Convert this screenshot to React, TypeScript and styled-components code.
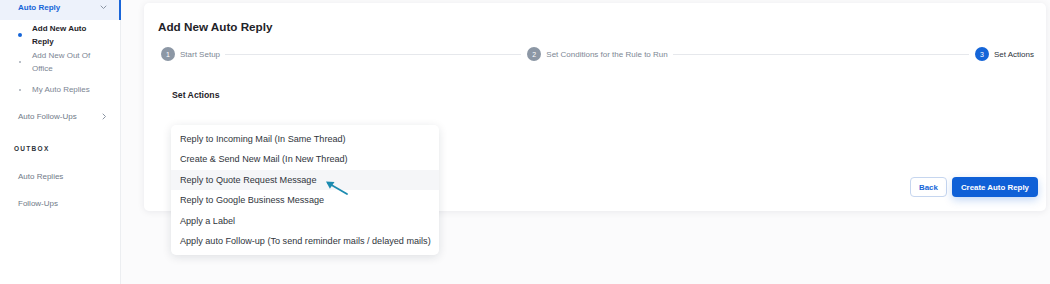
import { Fragment } from "react"
import styled, { createGlobalStyle } from "styled-components"

const GlobalStyle = createGlobalStyle`
  html, body {
    margin: 0;
    padding: 0;
    background: #fbfbfc;
    font-family: "Liberation Sans", Arial, sans-serif;
  }
  * { box-sizing: border-box; }
`

const ChevronDown = () => (
  <svg width="7" height="5" viewBox="0 0 7 5" fill="none">
    <path d="M1 1l2.5 2.5L6 1" stroke="#8b95a3" strokeWidth="1" strokeLinecap="round" strokeLinejoin="round" />
  </svg>
)

const ChevronRight = () => (
  <svg width="5" height="7" viewBox="0 0 5 7" fill="none">
    <path d="M1 1l2.5 2.5L1 6" stroke="#8b95a3" strokeWidth="1" strokeLinecap="round" strokeLinejoin="round" />
  </svg>
)

const subItems = [
  { label: "Add New Auto Reply", active: true, space: 2 },
  { label: "Add New Out Of Office", active: false, space: 1 },
  { label: "My Auto Replies", active: false, space: 8 },
]

const steps = [
  { n: 1, label: "Start Setup", current: false },
  { n: 2, label: "Set Conditions for the Rule to Run", current: false },
  { n: 3, label: "Set Actions", current: true },
]

const actions = [
  "Reply to Incoming Mail (In Same Thread)",
  "Create & Send New Mail (In New Thread)",
  "Reply to Quote Request Message",
  "Reply to Google Business Message",
  "Apply a Label",
  "Apply auto Follow-up (To send reminder mails / delayed mails)",
]

const App = () => {
  return (
    <Page>
      <GlobalStyle />
      <Sidebar>
        <NavGroup $open>
          <span>Auto Reply</span>
          <ChevronDown />
        </NavGroup>
        <SubList>
          {subItems.map((s) => (
            <SubItem key={s.label} $active={s.active} $space={s.space}>
              <Bullet $active={s.active} />
              <span>{s.label}</span>
            </SubItem>
          ))}
        </SubList>
        <NavGroup>
          <span>Auto Follow-Ups</span>
          <ChevronRight />
        </NavGroup>
        <SectionLabel>OUTBOX</SectionLabel>
        <NavLink>Auto Replies</NavLink>
        <NavLink>Follow-Ups</NavLink>
      </Sidebar>

      <Main>
        <Card>
          <Title>Add New Auto Reply</Title>
          <Stepper>
            {steps.map((s, i) => (
              <Fragment key={s.n}>
                <Step>
                  <StepDot $current={s.current}>{s.n}</StepDot>
                  <StepLabel $current={s.current}>{s.label}</StepLabel>
                </Step>
                {i < steps.length - 1 && <StepLine />}
              </Fragment>
            ))}
          </Stepper>

          <Section>
            <SectionTitle>Set Actions</SectionTitle>
            <SelectArea>
              <Menu>
                {actions.map((a, i) => (
                  <MenuItem key={a} $hover={i === 2}>
                    {a}
                  </MenuItem>
                ))}
                <Pointer width="28" height="20" viewBox="0 0 28 20" fill="none">
                  <path d="M25 17L6 6" stroke="#1c8bb0" strokeWidth="1.8" strokeLinecap="round" />
                  <path d="M4 4.5l8.5 0.6-4.6 6.6z" fill="#1c8bb0" />
                </Pointer>
              </Menu>
            </SelectArea>
          </Section>

          <Footer>
            <GhostButton>Back</GhostButton>
            <PrimaryButton>Create Auto Reply</PrimaryButton>
          </Footer>
        </Card>
      </Main>
    </Page>
  )
}

const Page = styled.div`
  display: flex;
  width: 1050px;
  height: 284px;
  overflow: hidden;
`

const Sidebar = styled.aside`
  width: 121px;
  flex-shrink: 0;
  background: #ffffff;
  border-right: 1px solid #eceef1;
  display: flex;
  flex-direction: column;
`

const NavGroup = styled.div<{ $open?: boolean }>`
  display: flex;
  align-items: center;
  justify-content: space-between;
  height: ${(p) => (p.$open ? "20px" : "26px")};
  padding: ${(p) => (p.$open ? "0 12px 6px 18px" : "0 12px 0 18px")};
  margin-right: -1px;
  font-size: 8px;
  font-weight: ${(p) => (p.$open ? 700 : 400)};
  color: ${(p) => (p.$open ? "#1565d8" : "#6f7a88")};
  background: ${(p) => (p.$open ? "#edf2fb" : "transparent")};
  border-right: 2px solid ${(p) => (p.$open ? "#1a66d9" : "transparent")};
`

const SubList = styled.div`
  display: flex;
  flex-direction: column;
  padding-bottom: 7px;
`

const SubItem = styled.div<{ $active: boolean; $space: number }>`
  display: flex;
  align-items: center;
  margin-top: ${(p) => p.$space}px;
  padding-left: 18px;
  font-size: 8px;
  line-height: 13px;
  font-weight: ${(p) => (p.$active ? 700 : 400)};
  color: ${(p) => (p.$active ? "#1f2329" : "#7b8593")};

  span {
    width: 64px;
    margin-left: 10px;
  }
`

const Bullet = styled.i<{ $active: boolean }>`
  display: block;
  width: ${(p) => (p.$active ? "4px" : "2px")};
  height: ${(p) => (p.$active ? "4px" : "2px")};
  margin: ${(p) => (p.$active ? "0" : "0 1px")};
  border-radius: 50%;
  background: ${(p) => (p.$active ? "#1565d8" : "#a4acb7")};
`

const SectionLabel = styled.div`
  margin-top: 10px;
  padding-left: 14px;
  height: 21px;
  line-height: 20px;
  font-size: 6.5px;
  font-weight: 700;
  letter-spacing: 1.3px;
  color: #2c3138;
`

const NavLink = styled.div`
  padding-left: 18px;
  margin-top: 7px;
  height: 20px;
  line-height: 20px;
  font-size: 8px;
  color: #6f7a88;
`

const Main = styled.main`
  flex: 1;
  padding: 3px 4px 0 23px;
`

const Card = styled.section`
  background: #ffffff;
  border-radius: 5px;
  box-shadow: 0 1px 7px rgba(20, 30, 50, 0.08);
  padding: 16px 8px 13px 14px;
  display: flex;
  flex-direction: column;
`

const Title = styled.h2`
  margin: 0;
  font-size: 11.7px;
  line-height: 16px;
  font-weight: 700;
  color: #1f2329;
`

const Stepper = styled.div`
  display: flex;
  align-items: center;
  margin: 12px 4px 0 3px;
  height: 14px;
`

const Step = styled.div`
  display: flex;
  align-items: center;
  flex-shrink: 0;
`

const StepDot = styled.span<{ $current: boolean }>`
  width: 14px;
  height: 14px;
  border-radius: 50%;
  flex-shrink: 0;
  display: flex;
  align-items: center;
  justify-content: center;
  font-size: 7px;
  color: #ffffff;
  background: ${(p) => (p.$current ? "#1565d8" : "#8c97a5")};
`

const StepLabel = styled.span<{ $current: boolean }>`
  margin-left: 5px;
  font-size: 8px;
  white-space: nowrap;
  color: ${(p) => (p.$current ? "#2e343c" : "#7d8794")};
`

const StepLine = styled.span`
  flex: 1;
  height: 1px;
  margin: 0 6px 0 5px;
  background: #e6e8ec;
`

const Section = styled.div`
  margin-top: 27px;
  padding-left: 14px;
`

const SectionTitle = styled.h3`
  margin: 0;
  font-size: 8.7px;
  line-height: 14px;
  font-weight: 700;
  color: #1f2329;
`

const SelectArea = styled.div`
  position: relative;
  height: 75px;
`

const Menu = styled.div`
  position: absolute;
  top: 23px;
  left: -1px;
  width: 268px;
  padding: 4px 0;
  background: #ffffff;
  border-radius: 5px;
  box-shadow: 0 2px 10px rgba(20, 30, 50, 0.12);
  z-index: 5;
`

const MenuItem = styled.div<{ $hover: boolean }>`
  height: 20.4px;
  line-height: 20.4px;
  padding-left: 9px;
  font-size: 9.1px;
  color: #30353c;
  white-space: nowrap;
  background: ${(p) => (p.$hover ? "#f5f6f8" : "transparent")};
`

const Pointer = styled.svg`
  position: absolute;
  left: 151px;
  top: 52px;
`

const Footer = styled.div`
  display: flex;
  justify-content: flex-end;
  gap: 5px;
  padding-bottom: 1px;
`

const GhostButton = styled.button`
  height: 20px;
  width: 37px;
  padding: 0;
  border: 1px solid #c6d6ef;
  border-radius: 4px;
  background: #ffffff;
  color: #1565d8;
  font-family: inherit;
  font-size: 7.9px;
  font-weight: 700;
`

const PrimaryButton = styled.button`
  height: 20px;
  padding: 0 9px;
  border: none;
  border-radius: 4px;
  background: #0f60d7;
  color: #ffffff;
  font-family: inherit;
  font-size: 7.9px;
  font-weight: 700;
  box-shadow: 0 3px 8px rgba(15, 96, 215, 0.25);
`

export default App
